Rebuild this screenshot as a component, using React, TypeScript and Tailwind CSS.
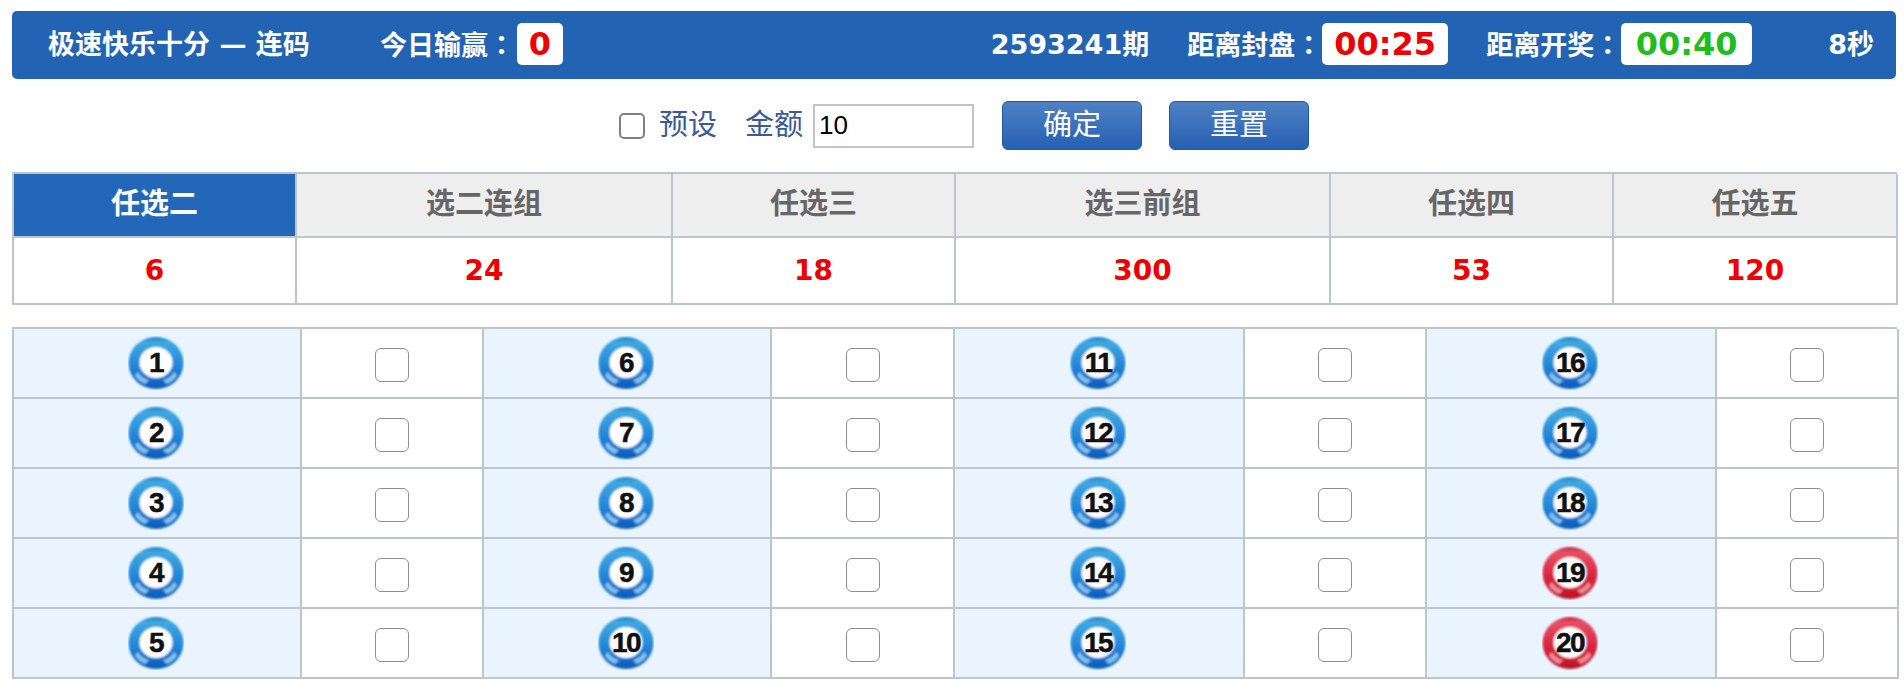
const FONT = "font-['Liberation_Sans','Noto_Sans_CJK_SC',sans-serif]";
const BOLD = "font-['DejaVu_Sans','Noto_Sans_CJK_SC',sans-serif] font-bold";

const tabs = [
  { name: "任选二", odds: "6", active: true },
  { name: "选二连组", odds: "24" },
  { name: "任选三", odds: "18" },
  { name: "选三前组", odds: "300" },
  { name: "任选四", odds: "53" },
  { name: "任选五", odds: "120" },
];

const Ball = ({ n }: { n: number }) => {
  const red = n >= 19;
  const id = red ? "ball-red" : "ball-blue";
  return (
    <svg width="56" height="54" viewBox="0 0 56 54" className="block mr-[2px]">
      <defs>
        <linearGradient id="ball-blue" x1="0" y1="0" x2="0" y2="1">
          <stop offset="0" stopColor="#1a7fc4" />
          <stop offset="0.1" stopColor="#3fa9e2" />
          <stop offset="0.55" stopColor="#2388d8" />
          <stop offset="0.85" stopColor="#1169c8" />
          <stop offset="1" stopColor="#0c5cb2" />
        </linearGradient>
        <linearGradient id="ball-red" x1="0" y1="0" x2="0" y2="1">
          <stop offset="0" stopColor="#c41c38" />
          <stop offset="0.1" stopColor="#e85068" />
          <stop offset="0.55" stopColor="#d92640" />
          <stop offset="0.85" stopColor="#cc1a30" />
          <stop offset="1" stopColor="#b41024" />
        </linearGradient>
        <filter id="ball-soft" x="-10%" y="-10%" width="120%" height="120%">
          <feGaussianBlur stdDeviation="0.8" />
        </filter>
      </defs>
      <g filter="url(#ball-soft)">
        <ellipse cx="28" cy="27" rx="27.5" ry="26" fill={`url(#${id})`} />
        <path
          d="M7 39 Q10 45 17 48 L21 44 Q13 42 10 36Z"
          fill={red ? "#f4a6b0" : "#9ed8f4"}
          opacity="0.8"
        />
        <path
          d="M49 39 Q46 45 39 48 L35 44 Q43 42 46 36Z"
          fill={red ? "#f4a6b0" : "#9ed8f4"}
          opacity="0.8"
        />
        <ellipse cx="28" cy="26.5" rx="16.5" ry="15.5" fill="#ffffff" />
      </g>
      <text
        x="28"
        y="36"
        textAnchor="middle"
        fontFamily="'Liberation Sans', sans-serif"
        fontWeight="700"
        fontSize="28"
        letterSpacing="-1.5"
        stroke="#111111"
        strokeWidth="0.5"
        fill="#111111"
      >
        {n}
      </text>
    </svg>
  );
};

const Box = () => (
  <input
    type="checkbox"
    className="w-[34px] h-[34px] appearance-none rounded-[6px] border border-[#8f8f8f] bg-white mt-[3px]"
  />
);

const Colon = () => <span className="font-['Noto_Sans_CJK_TC',sans-serif]">：</span>;

export default function App() {
  const rows = [0, 1, 2, 3, 4];
  return (
    <div className={`${FONT} bg-white w-[1904px] h-[685px] overflow-hidden pt-[11px] pl-3 pr-2`}>
      <div className={`${BOLD} h-[68px] bg-[#2363b4] rounded-[5px] flex items-center text-white text-[27px] pl-[36px] pr-[22px]`}>
        <span className="w-[332px] whitespace-pre">极速快乐十分 — 连码</span>
        <span>今日输赢<Colon /></span>
        <span className="ml-[2px] mb-[2px] bg-white rounded-[5px] w-[46px] h-[42px] flex items-center justify-center text-[#ee0000] text-[32px]">0</span>
        <span className="ml-auto">2593241期</span>
        <span className="ml-[38px]">距离封盘<Colon /></span>
        <span className="mb-[2px] bg-white rounded-[5px] w-[126px] h-[42px] flex items-center justify-center text-[#ee0000] text-[32px]">00:25</span>
        <span className="ml-[38px]">距离开奖<Colon /></span>
        <span className="mb-[2px] bg-white rounded-[5px] w-[131px] h-[42px] flex items-center justify-center text-[#1fbd1f] text-[32px]">00:40</span>
        <span className="ml-[76px]">8秒</span>
      </div>

      <div className="h-[93px] flex items-center pl-[607px] text-[#3b5a9a] text-[29px]">
        <input
          type="checkbox"
          className="w-[26px] h-[26px] appearance-none rounded-[5px] border-2 border-[#808080] bg-white"
        />
        <span className="ml-[14px]">预设</span>
        <span className="ml-[28px]">金额</span>
        <input
          readOnly
          value="10"
          className="ml-[10px] w-[161px] h-[44px] border-2 border-[#c4c4c4] px-[4px] text-[26px] text-black outline-none"
        />
        <button className="ml-[28px] w-[140px] h-[49px] rounded-[6px] border border-[#1f5aa5] bg-gradient-to-b from-[#4f80c4] to-[#2560b2] text-white text-[29px]">确定</button>
        <button className="ml-[27px] w-[140px] h-[49px] rounded-[6px] border border-[#1f5aa5] bg-gradient-to-b from-[#4f80c4] to-[#2560b2] text-white text-[29px]">重置</button>
      </div>

      <div className="grid grid-cols-[283px_376px_283px_375px_283px_284px] border-t-2 border-l-2 border-[#bcc5d0] w-[1885px]">
        {tabs.map((t) => (
          <div
            key={t.name}
            className={`h-[64px] flex items-center justify-center border-r-2 border-b-2 border-[#bcc5d0] font-bold text-[29px] ${
              t.active ? "bg-[#2368b8] text-white" : "bg-[#eeeeee] text-[#666666]"
            }`}
          >
            {t.name}
          </div>
        ))}
        {tabs.map((t) => (
          <div
            key={t.odds}
            className={`${BOLD} h-[67px] flex items-center justify-center border-r-2 border-b-2 border-[#bcc5d0] text-[28px] text-[#ee0000]`}
          >
            {t.odds}
          </div>
        ))}
      </div>

      <div className="mt-[22px] grid grid-cols-[288px_182px_288px_183px_290px_182px_290px_182px] border-t-2 border-l-2 border-[#bcc5d0] w-[1885px]">
        {rows.flatMap((r) =>
          [1, 6, 11, 16].flatMap((start) => [
            <div
              key={`b${start + r}`}
              className="h-[70px] flex items-center justify-center bg-[#e9f4fe] border-r-2 border-b-2 border-[#bcc5d0]"
            >
              <Ball n={start + r} />
            </div>,
            <div
              key={`c${start + r}`}
              className="h-[70px] flex items-center justify-center border-r-2 border-b-2 border-[#bcc5d0]"
            >
              <Box />
            </div>,
          ])
        )}
      </div>
    </div>
  );
}
